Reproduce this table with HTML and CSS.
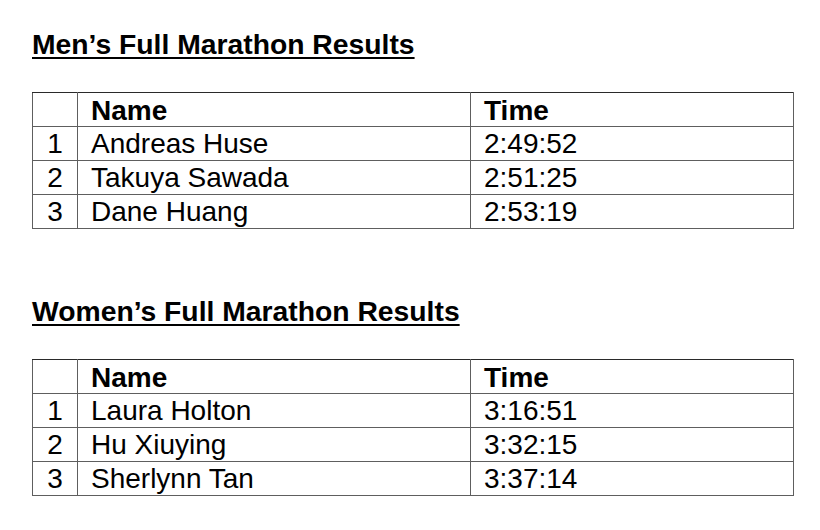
FILE: index.html
```html
<!DOCTYPE html>
<html>
<head>
<meta charset="utf-8">
<link rel="stylesheet" href="styles.css">
</head>
<body>
<div class="page">
  <h2 class="title">Men’s Full Marathon Results</h2>
  <table class="results">
    <colgroup><col class="c-rank"><col class="c-name"><col class="c-time"></colgroup>
    <tr class="head"><th></th><th>Name</th><th>Time</th></tr>
    <tr><td class="rank">1</td><td>Andreas Huse</td><td>2:49:52</td></tr>
    <tr><td class="rank">2</td><td>Takuya Sawada</td><td>2:51:25</td></tr>
    <tr><td class="rank">3</td><td>Dane Huang</td><td>2:53:19</td></tr>
  </table>
  <h2 class="title second">Women’s Full Marathon Results</h2>
  <table class="results">
    <colgroup><col class="c-rank"><col class="c-name"><col class="c-time"></colgroup>
    <tr class="head"><th></th><th>Name</th><th>Time</th></tr>
    <tr><td class="rank">1</td><td>Laura Holton</td><td>3:16:51</td></tr>
    <tr><td class="rank">2</td><td>Hu Xiuying</td><td>3:32:15</td></tr>
    <tr><td class="rank">3</td><td>Sherlynn Tan</td><td>3:37:14</td></tr>
  </table>
</div>
</body>
</html>
```
FILE: styles.css
```css
html, body {
  margin: 0;
  padding: 0;
  background: #fff;
}
.page {
  padding: 28px 0 0 32px;
  font-family: "Liberation Sans", Arial, sans-serif;
  color: #000;
}
.title {
  margin: 0 0 32px 0;
  font-size: 28.3px;
  line-height: 32px;
  font-weight: bold;
  text-decoration: underline;
  text-decoration-thickness: 2px;
  text-underline-offset: 3px;
}
.title.second {
  margin-top: 66px;
}
.results {
  border-collapse: collapse;
  width: 761px;
  table-layout: fixed;
  font-size: 28px;
}
.c-rank { width: 45px; }
.c-name { width: 393px; }
.c-time { width: 323px; }
.results th,
.results td {
  border: 1px solid #5e5e5e;
  height: 33px;
  padding: 0 0 0 13px;
  line-height: 32px;
  text-align: left;
  vertical-align: bottom;
  white-space: nowrap;
}
.results th {
  font-weight: bold;
  line-height: 31px;
}
.results .rank {
  text-align: center;
  padding: 0;
}
.results tr:first-child th {
  border-top-color: #2a2a2a;
}
```
